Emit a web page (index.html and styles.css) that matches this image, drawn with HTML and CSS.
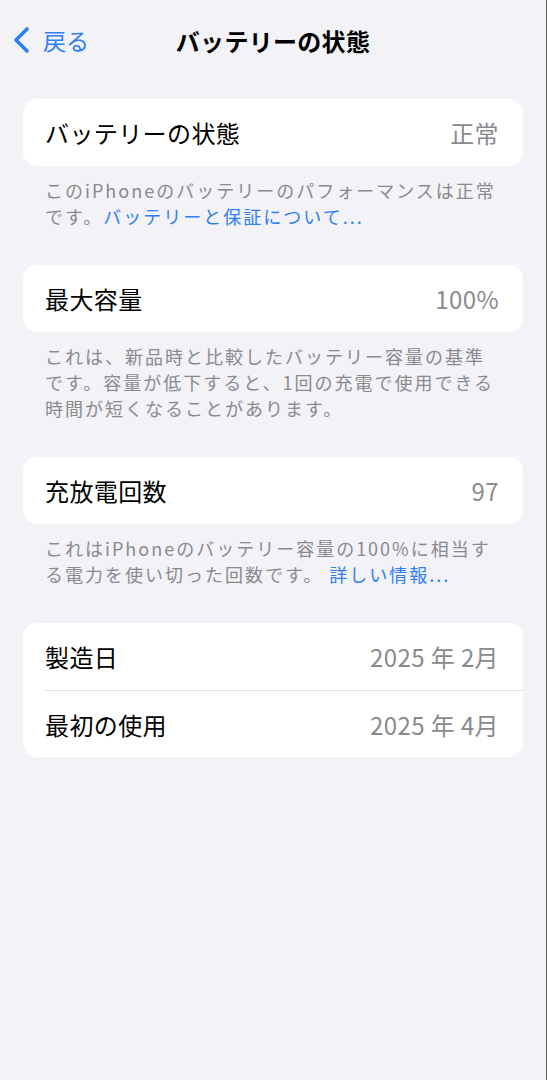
FILE: index.html
```html
<!DOCTYPE html>
<html lang="ja">
<head>
    <meta charset="UTF-8">
    <meta name="viewport" content="width=device-width, initial-scale=1.0">
    <title>バッテリーの状態</title>
    <link rel="stylesheet" href="styles.css">
</head>
<body>
    <div class="screen">
        <header class="nav">
            <a class="back" href="#">
                <svg class="chevron" width="18" height="28" viewBox="0 0 18 28">
                    <path d="M15 3 L4 14 L15 25" fill="none" stroke="currentColor" stroke-width="3.6" stroke-linecap="round" stroke-linejoin="round"/>
                </svg>
                <span>戻る</span>
            </a>
            <h1 class="nav-title">バッテリーの状態</h1>
        </header>

        <main class="content">
            <div class="card">
                <div class="row">
                    <span class="label">バッテリーの状態</span>
                    <span class="value">正常</span>
                </div>
            </div>
            <p class="footer">このiPhoneのバッテリーのパフォーマンスは正常<br>です。<a href="#">バッテリーと保証について...</a></p>

            <div class="card">
                <div class="row">
                    <span class="label">最大容量</span>
                    <span class="value">100%</span>
                </div>
            </div>
            <p class="footer">これは、新品時と比較したバッテリー容量の基準<br>です。容量が低下すると、1回の充電で使用できる<br>時間が短くなることがあります。</p>

            <div class="card">
                <div class="row">
                    <span class="label">充放電回数</span>
                    <span class="value">97</span>
                </div>
            </div>
            <p class="footer">これはiPhoneのバッテリー容量の100%に相当す<br>る電力を使い切った回数です。 <a href="#">詳しい情報...</a></p>

            <div class="card">
                <div class="row">
                    <span class="label">製造日</span>
                    <span class="value">2025 年 2月</span>
                </div>
                <div class="row">
                    <span class="label">最初の使用</span>
                    <span class="value">2025 年 4月</span>
                </div>
            </div>
        </main>
    </div>
</body>
</html>
```

FILE: styles.css
```css
* {
    box-sizing: border-box;
}

body {
    margin: 0;
    padding: 0;
    background-color: #f2f2f7;
    font-family: "Noto Sans CJK JP", "Noto Sans", sans-serif;
    color: #000;
}

.screen {
    min-height: 1080px;
    border-right: 1px solid #5c5c5c;
}

.nav {
    position: relative;
    height: 84px;
    padding-bottom: 4px;
    display: flex;
    align-items: center;
    justify-content: center;
}

.back {
    position: absolute;
    left: 12px;
    top: 26px;
    display: flex;
    align-items: center;
    gap: 13px;
    color: #2f7ff2;
    text-decoration: none;
    font-size: 23px;
    line-height: 28px;
}

.nav-title {
    margin: 0;
    font-size: 24px;
    font-weight: 700;
    letter-spacing: 0.3px;
}

.content {
    padding: 15px 23px 0 23px;
}

.card {
    background-color: #fff;
    border-radius: 14px;
    overflow: hidden;
}

.row {
    height: 67px;
    margin-left: 22px;
    padding-right: 24px;
    display: flex;
    align-items: center;
    justify-content: space-between;
    font-size: 24px;
    letter-spacing: 0.4px;
}

.row + .row {
    border-top: 1px solid #e2e2e6;
}

.value {
    color: #8a8a8e;
}

.footer {
    margin: 0;
    padding: 11px 22px 36px 22px;
    font-size: 18px;
    line-height: 26px;
    color: #8a8a8e;
    letter-spacing: 2px;
}

.footer a {
    color: #2f7ff2;
    text-decoration: none;
}
```
